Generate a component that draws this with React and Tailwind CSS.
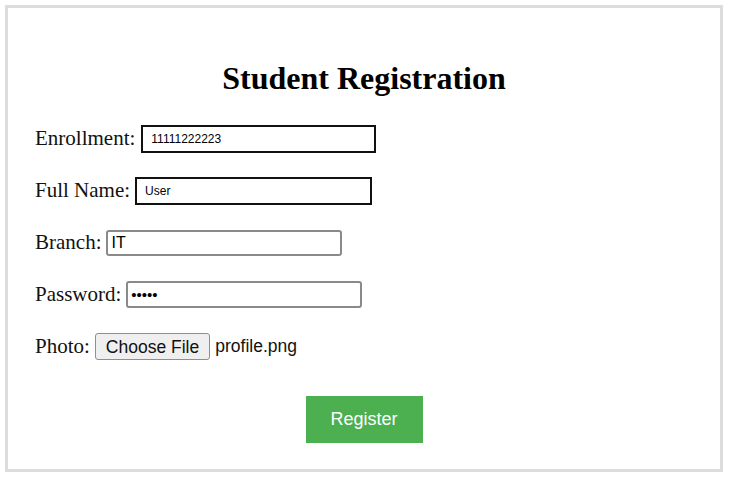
import { useState } from 'react'

const serif = "font-['Liberation_Serif','Times_New_Roman',serif]"
const sans = "font-['Liberation_Sans',Arial,sans-serif]"

export default function App() {
  const [form, setForm] = useState({
    enrollment: '11111222223',
    name: 'User',
    branch: 'IT',
    password: '12345',
  })

  const update = (key) => (e) => setForm({ ...form, [key]: e.target.value })

  return (
    <div className="w-[729px] h-[477px] bg-white pt-[5px] pl-[5px]">
      <div className={`w-[718px] h-[467px] border-[3px] border-[#dcdcdc] pt-[52px] pl-[27px] ${serif} text-[#111]`}>
        {/* 제목 */}
        <h1 className="text-[32px] leading-[37px] font-bold text-center pr-[27px] text-black">
          Student Registration
        </h1>

        <div className="mt-[28px] flex flex-col gap-[25px]">
          <div className="flex items-center h-[27px]">
            <label className="text-[21px]">Enrollment:</label>
            <input
              value={form.enrollment}
              onChange={update('enrollment')}
              className={`ml-[6px] w-[235px] h-[28px] border-2 border-[#111] px-[8px] text-[12px] text-black outline-none ${sans}`}
            />
          </div>

          <div className="flex items-center h-[27px]">
            <label className="text-[21px]">Full Name:</label>
            <input
              value={form.name}
              onChange={update('name')}
              className={`ml-[5px] w-[237px] h-[28px] border-2 border-[#111] px-[8px] text-[12px] text-black outline-none ${sans}`}
            />
          </div>

          <div className="flex items-center h-[27px]">
            <label className="text-[21px]">Branch:</label>
            <input
              value={form.branch}
              onChange={update('branch')}
              className={`ml-[5px] w-[236px] h-[26px] border-2 border-[#8a8a8a] rounded-[3px] px-[3px] text-[16px] text-black outline-none ${sans}`}
            />
          </div>

          <div className="flex items-center h-[27px]">
            <label className="text-[21px]">Password:</label>
            <input
              type="password"
              value={form.password}
              onChange={update('password')}
              className={`ml-[5px] w-[236px] h-[27px] border-2 border-[#8a8a8a] rounded-[3px] px-[3px] text-[15px] text-black outline-none ${sans}`}
            />
          </div>

          <div className="flex items-center h-[27px]">
            <label className="text-[21px]">Photo:</label>
            <button
              className={`ml-[5px] h-[27px] px-[10px] bg-[#efefef] border border-[#8f8f8f] rounded-[3px] text-[17.5px] text-[#111] ${sans}`}
            >
              Choose File
            </button>
            <span className={`ml-[5px] text-[17.5px] text-[#111] ${sans}`}>profile.png</span>
          </div>
        </div>

        <div className="mt-[36px] flex justify-center pr-[27px]">
          <button className={`w-[117px] h-[47px] bg-[#4caf50] text-white text-[18px] ${sans}`}>
            Register
          </button>
        </div>
      </div>
    </div>
  )
}
